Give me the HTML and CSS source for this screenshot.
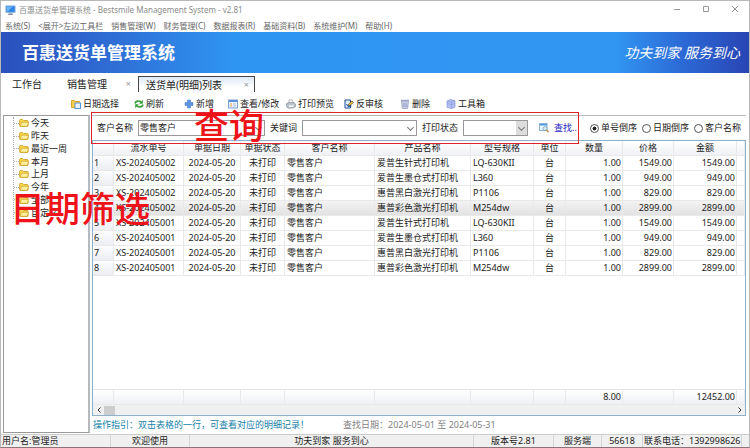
FILE: index.html
```html
<!DOCTYPE html>
<html lang="zh-CN">
  <head>
    <meta charset="UTF-8" />
    <meta name="viewport" content="width=device-width, initial-scale=1.0" />
    <title>百惠送货单管理系统</title>
    <link rel="stylesheet" href="styles.css" />
  </head>
  <body>
    <header class="title-bar">
      <svg class="app-icon" viewBox="0 0 12 12">
        <rect x="1" y="1" width="10" height="7" fill="#2f86e8" stroke="#8fb4dc" />
        <path d="M2 2h6L3 7H2z" fill="#6db4ff" />
        <path d="M4 9h4l1 2H3z" fill="#8a97a8" />
      </svg>
      <h1>百惠送货单管理系统 - Bestsmile Management System - v2.81</h1>
      <div class="window-buttons">
        <button aria-label="最小化"><svg viewBox="0 0 8 8"><path d="M1 4.500h6" /></svg></button>
        <button aria-label="最大化"><svg viewBox="0 0 8 8"><path d="M1.500 1.500h5v5h-5z" /></svg></button>
        <button aria-label="关闭"><svg viewBox="0 0 8 8"><path d="M1 1l6 6M7 1L1 7" /></svg></button>
      </div>
    </header>

    <nav class="menu-bar">
      <a href="#">系统(S)</a>
      <a href="#">&lt;展开&gt;左边工具栏</a>
      <a href="#">销售管理(W)</a>
      <a href="#">财务管理(C)</a>
      <a href="#">数据报表(R)</a>
      <a href="#">基础资料(B)</a>
      <a href="#">系统维护(M)</a>
      <a href="#">帮助(H)</a>
    </nav>

    <div class="banner">
      <h2>百惠送货单管理系统</h2>
      <p>功夫到家 服务到心</p>
    </div>

    <div class="tabs">
      <button class="tab home">工作台</button>
      <button class="tab sales">销售管理<span class="close">×</span></button>
      <button class="tab active">送货单(明细)列表<span class="close">×</span></button>
    </div>

    <div class="toolbar">
      <button>
        <svg viewBox="0 0 10 10"><path d="M.5 1.500h3l1 1h4v6h-8z" fill="#f7cf4f" stroke="#d9a126" /><rect x="4" y="4" width="5.500" height="5.500" fill="#e8f2ff" stroke="#5a94d8" /></svg>
        日期选择
      </button>
      <button>
        <svg viewBox="0 0 10 10"><path d="M1 4.500C1.500 2 5 1.200 7 3M9 5.500C8.500 8 5 8.800 3 7" fill="none" stroke="#35a035" stroke-width="1.600" /><path d="M8.800.8v4H5zM1.200 9.200v-4H5z" fill="#35a035" /></svg>
        刷新
      </button>
      <button>
        <svg viewBox="0 0 10 10"><path d="M3.500 1h3v2.500H9v3H6.500V9h-3V6.500H1v-3h2.500z" fill="#5d95e0" stroke="#3d72c4" stroke-width=".5" /></svg>
        新增
      </button>
      <button>
        <svg viewBox="0 0 10 10"><rect x=".5" y="1" width="9" height="8" fill="#eef4ff" stroke="#7da3dc" /><path d="M1 1h8v2H1z" fill="#5b8fdc" /><path d="M2 5h2M2 7h2" stroke="#e0a243" /><path d="M5 5h3M5 7h3" stroke="#a8bfe4" /></svg>
        查看/修改
      </button>
      <button>
        <svg viewBox="0 0 10 10"><path d="M3 4V.8h3L7.500 4" fill="#fff" stroke="#99a" stroke-width=".7" /><path d="M.6 4.600L3 3.600h5l1.400 1.500v2.600L7 9H2L.6 7.500z" fill="#bcc4ce" stroke="#7c8793" stroke-width=".7" /><path d="M3 6.500h4.500V8H3z" fill="#fff" /></svg>
        打印预览
      </button>
      <button>
        <svg viewBox="0 0 10 10"><path d="M1 1h5.500v8H1z" fill="#e4efff" stroke="#1d4c9c" /><path d="M4 7l.6-2L8 2l1.500 1.500L6 6.500z" fill="#f4c430" stroke="#333" stroke-width=".6" /><path d="M2.500 5l1.500 2.500L7.500 7" fill="none" stroke="#1d4c9c" /></svg>
        反审核
      </button>
      <button>
        <svg viewBox="0 0 10 10"><path d="M1.500 2h7L7.700 9.400H2.300z" fill="#c9cee6" stroke="#9096bd" stroke-width=".7" /><path d="M1 1.300h8" stroke="#8c93b6" /><path d="M3.600 4v4M5 4v4M6.400 4v4" stroke="#8f96c4" stroke-width=".6" /></svg>
        删除
      </button>
      <button>
        <svg viewBox="0 0 10 10"><path d="M1 2.200L4 .6l5 1v6.600L5.500 9.500 1 8.300z" fill="#b4c3f2" stroke="#7f93d8" stroke-width=".7" /><path d="M1 4.500l4.500 1L9 4.500M5.500 3v6.500M1 2.200l4.500 1L9 1.600" fill="none" stroke="#7f93d8" stroke-width=".6" /></svg>
        工具箱
      </button>
    </div>

    <main class="workspace">
      <aside class="sidebar">
        <ul class="date-tree" id="date-tree"></ul>
        <div class="note note-dates">日期筛选</div>
      </aside>

      <section class="content">
        <form class="search">
          <label for="customer">客户名称</label>
          <span class="combo customer"><select id="customer"><option>零售客户</option></select></span>
          <label for="keyword">关键词</label>
          <span class="combo keyword"><select id="keyword"><option></option></select></span>
          <label for="printed">打印状态</label>
          <span class="combo printed"><select id="printed"><option></option></select></span>
          <button type="button" class="find">
            <svg viewBox="0 0 10 10"><rect x=".5" y=".5" width="7.500" height="7" fill="#eaf6ff" stroke="#86b4dc" /><path d="M1 1h7v1.500H1z" fill="#4f9ad8" /><circle cx="6" cy="5.500" r="2" fill="#d5f0fa" stroke="#79a" stroke-width=".7" /><path d="M7.500 7l2 2.300" stroke="#d08a35" stroke-width="1.400" /></svg>
            查找..
          </button>
          <div class="sorting">
            <label><input type="radio" name="sort" checked />单号倒序</label>
            <label><input type="radio" name="sort" />日期倒序</label>
            <label><input type="radio" name="sort" />客户名称</label>
          </div>
          <div class="search-frame"></div>
          <div class="note note-search">查询</div>
        </form>

        <div class="grid">
          <div class="grid-body">
            <table>
              <colgroup>
                <col class="c-no" /><col class="c-serial" /><col class="c-date" /><col class="c-state" />
                <col /><col class="c-product" /><col class="c-model" /><col class="c-unit" />
                <col class="c-qty" /><col class="c-price" /><col class="c-total" /><col class="c-end" />
              </colgroup>
              <thead>
                <tr>
                  <th></th><th>流水单号</th><th>单据日期</th><th>单据状态</th><th>客户名称</th><th>产品名称</th>
                  <th>型号规格</th><th>单位</th><th>数量</th><th>价格</th><th>金额</th><th></th>
                </tr>
              </thead>
              <tbody id="rows"></tbody>
            </table>
          </div>
          <table class="totals">
            <colgroup>
              <col class="c-no" /><col class="c-serial" /><col class="c-date" /><col class="c-state" />
              <col /><col class="c-product" /><col class="c-model" /><col class="c-unit" />
              <col class="c-qty" /><col class="c-price" /><col class="c-total" /><col class="c-end" />
            </colgroup>
            <tbody>
              <tr>
                <td></td><td></td><td></td><td></td><td></td><td></td><td></td><td></td>
                <td class="num">8.00</td><td></td><td class="num">12452.00</td><td></td>
              </tr>
            </tbody>
          </table>
          <div class="scrollbar">
            <button aria-label="向左"><svg viewBox="0 0 6 8"><path d="M4.500 1.500L2 4l2.500 2.500" /></svg></button>
            <div class="thumb"></div>
            <button aria-label="向右"><svg viewBox="0 0 6 8"><path d="M1.500 1.500L4 4 1.500 6.500" /></svg></button>
          </div>
        </div>

        <div class="hints">
          <span class="guide">操作指引：双击表格的一行，可查看对应的明细记录！</span>
          <span class="range">查找日期：2024-05-01 至 2024-05-31</span>
        </div>
      </section>
    </main>

    <footer class="status-bar">
      <div>用户名:管理员</div>
      <div>欢迎使用</div>
      <div>功夫到家 服务到心</div>
      <div>版本号2.81</div>
      <div>服务端</div>
      <div>56618</div>
      <div>联系电话：1392998626</div>
    </footer>

    <script>
      const periods = ["今天", "昨天", "最近一周", "本月", "上月", "今年", "全部", "自定义"];
      const folder =
        '<svg viewBox="0 0 10 10"><path d="M.6 2.500q0-1 1-1h2l1 1h3.500q1 0 1 1v4q0 1-1 1H1.600q-1 0-1-1z" fill="#f8d84c" stroke="#c99a1c" stroke-width=".8"/><path d="M2.500 4.300h7L8.300 8.300H1.200z" fill="#fdf0a0" stroke="#c99a1c" stroke-width=".6"/></svg>';
      document.getElementById("date-tree").innerHTML = periods
        .map((name) => `<li><a href="#">${folder}${name}</a></li>`)
        .join("");

      const products = [
        ["爱普生针式打印机", "LQ-630KII", "1549.00"],
        ["爱普生墨仓式打印机", "L360", "949.00"],
        ["惠普黑白激光打印机", "P1106", "829.00"],
        ["惠普彩色激光打印机", "M254dw", "2899.00"],
      ];
      const orders = ["XS-202405002", "XS-202405001"];
      let rows = "";
      orders.forEach((order, o) => {
        products.forEach(([product, model, price], p) => {
          const no = o * products.length + p + 1;
          rows += `<tr class="${no === 4 ? "selected" : ""}">
            <th>${no}</th><td>${order}</td><td class="mid">2024-05-20</td><td class="mid">未打印</td>
            <td>零售客户</td><td>${product}</td><td>${model}</td><td class="mid">台</td>
            <td class="num">1.00</td><td class="num">${price}</td><td class="num">${price}</td><td></td>
          </tr>`;
        });
      });
      document.getElementById("rows").innerHTML = rows;
    </script>
  </body>
</html>
```

FILE: styles.css
```css
* {
  margin: 0;
  padding: 0;
  box-sizing: border-box;
}

body {
  display: flex;
  flex-direction: column;
  height: 100vh;
  overflow: hidden;
  font-family: "Noto Sans", "Noto Sans CJK SC", sans-serif;
  font-size: 9px;
  line-height: 12px;
  color: #222;
  background: #fff;
  border: 1px solid #b9b9b9;
  border-bottom-color: #8c7478;
  white-space: nowrap;
}

button,
select {
  font: inherit;
  color: inherit;
  background: none;
  border: none;
}

a {
  color: inherit;
  text-decoration: none;
}

svg {
  flex: none;
  width: 10px;
  height: 10px;
}

/* Window title and menu */
.title-bar {
  display: flex;
  align-items: center;
  height: 18px;
  padding-left: 4px;
  color: #8c8c8c;
}

.title-bar h1 {
  flex: 1;
  font-size: 8px;
  font-weight: normal;
}

.title-bar .app-icon {
  width: 11px;
  height: 11px;
  margin-right: 3px;
}

.window-buttons {
  display: flex;
}

.window-buttons button {
  width: 29px;
  height: 16px;
}

.window-buttons svg {
  width: 8px;
  height: 8px;
  fill: none;
  stroke: #999;
}

.menu-bar {
  display: flex;
  gap: 8px;
  height: 13px;
  padding-left: 4px;
  font-size: 8px;
  line-height: 14px;
  color: #666;
}

/* Banner */
.banner {
  display: flex;
  align-items: center;
  justify-content: space-between;
  height: 41px;
  padding: 0 9px 0 21px;
  color: #fff;
  background: linear-gradient(90deg, #2b51be 0%, #2e62cc 10%, #2f95f2 31%, #3196f2 82%, #2c6ad6 91%, #2945b4 100%);
}

.banner h2 {
  font-size: 17px;
  line-height: 24px;
}

.banner p {
  font-size: 14px;
  font-style: italic;
  line-height: 20px;
}

/* Tabs */
.tabs {
  display: flex;
  align-items: flex-end;
  height: 19px;
}

.tab {
  display: flex;
  align-items: center;
  justify-content: space-between;
  height: 16px;
  font-size: 10px;
}

.tab .close {
  font-size: 9px;
  color: #999;
}

.tab.home {
  width: 55px;
  padding-left: 11px;
}

.tab.sales {
  width: 82px;
  padding: 0 7px 0 11px;
}

.tab.active {
  width: 117px;
  padding: 0 5px 0 7px;
  border: 1px solid #444;
  border-bottom: none;
  background: linear-gradient(#dfe9f8, #fff 70%);
}

/* Toolbar */
.toolbar {
  display: grid;
  grid-template-columns: 63px 50px 44px 58px 58px 56px 46px 60px;
  align-items: center;
  height: 23px;
  padding-left: 70px;
}

.toolbar button,
.find {
  display: flex;
  align-items: center;
  gap: 2px;
}

/* Workspace */
.workspace {
  display: flex;
  flex: 1;
  gap: 2px;
  min-height: 0;
  padding: 0 3px 0 2px;
}

.sidebar {
  position: relative;
  width: 87px;
  margin-bottom: 1px;
  padding: 1px 0 0 9px;
  border: 1px solid #999;
  border-right: 2px solid #b5b9c0;
}

.date-tree {
  display: flex;
  flex-direction: column;
  height: 102px;
  list-style: none;
  border-left: 1px dotted #aaa;
}

.date-tree li {
  display: flex;
  flex: 1;
  align-items: center;
}

.date-tree li::before {
  content: "";
  width: 5px;
  border-top: 1px dotted #aaa;
}

.date-tree a {
  display: flex;
  align-items: center;
  gap: 2px;
}

.note {
  position: absolute;
  z-index: 2;
  font-size: 35px;
  font-weight: 500;
  line-height: 36px;
  color: #ee1318;
  pointer-events: none;
}

.note-dates {
  top: 75px;
  left: 6px;
}

.content {
  display: flex;
  flex: 1;
  flex-direction: column;
  min-width: 0;
}

/* Search form */
.search {
  position: relative;
  display: flex;
  align-items: center;
  gap: 5px;
  height: 25px;
  padding-left: 5px;
  border-top: 1px solid #bbb;
}

.search-frame {
  position: absolute;
  top: -4px;
  left: -1px;
  z-index: 1;
  width: 488px;
  height: 32px;
  border: 1px solid #e0242c;
  pointer-events: none;
}

.note-search {
  top: -8px;
  left: 102px;
}

.combo {
  position: relative;
  height: 16px;
}

.combo select {
  display: block;
  width: 100%;
  height: 100%;
  padding: 0 12px 0 1px;
  border: 1px solid #999;
  background: #fff;
  appearance: none;
}

.combo::after {
  content: "";
  position: absolute;
  top: 5px;
  right: 4px;
  width: 4px;
  height: 4px;
  border: solid #777;
  border-width: 0 1px 1px 0;
  transform: rotate(45deg);
}

.customer {
  width: 127px;
}

.keyword {
  width: 115px;
}

.printed {
  width: 65px;
}

.printed select {
  background: linear-gradient(#ddd, #ddd) right / 11px 100% no-repeat #fff;
}

.find {
  gap: 5px;
  margin-left: 6px;
  color: #2222c4;
}

.sorting {
  display: flex;
  gap: 5px;
  margin-left: auto;
  padding-right: 5px;
}

.sorting label {
  display: flex;
  align-items: center;
  gap: 2px;
}

.sorting input {
  width: 9px;
  height: 9px;
  appearance: none;
  border: 1px solid #555;
  border-radius: 50%;
}

.sorting input:checked {
  background: radial-gradient(#222 35%, #fff 45%);
}

/* Detail grid */
.grid {
  display: flex;
  flex: 1;
  flex-direction: column;
  min-height: 0;
  border: 1px solid #8fb0cc;
}

.grid-body {
  flex: 1;
  min-height: 0;
  overflow: hidden;
}

table {
  width: 100%;
  table-layout: fixed;
  border-collapse: separate;
  border-spacing: 0;
}

.c-no { width: 21px; }
.c-serial { width: 70px; }
.c-date { width: 57px; }
.c-state { width: 44px; }
.c-product { width: 96px; }
.c-model { width: 63px; }
.c-unit { width: 32px; }
.c-qty { width: 57px; }
.c-price { width: 51px; }
.c-total { width: 63px; }
.c-end { width: 8px; }

th,
td {
  height: 15px;
  padding: 0 1px;
  overflow: hidden;
  font-weight: normal;
  text-align: left;
  border-right: 1px solid #e9e9e9;
  border-bottom: 1px solid #e9e9e9;
}

thead th {
  text-align: center;
  background: linear-gradient(#fff, #eff1f5);
}

tbody th {
  background: linear-gradient(#fdfdfe, #eceef3);
}

td {
  padding-left: 2px;
}

.mid {
  padding: 0;
  text-align: center;
}

.num {
  text-align: right;
}

.selected td {
  background: linear-gradient(#f3f3f3, #e2e2e2);
}

.totals td {
  height: 16px;
  border-top: 1px solid #e4e4e4;
  background: linear-gradient(#fff, #eef0f5);
}

.scrollbar {
  display: flex;
  align-items: center;
  height: 10px;
  background: #f0f0f0;
}

.scrollbar button {
  width: 11px;
  height: 10px;
}

.scrollbar svg {
  display: block;
  width: 6px;
  height: 8px;
  margin: 0 auto;
  fill: none;
  stroke: #333;
}

.scrollbar .thumb {
  width: 11px;
  height: 9px;
  margin-right: auto;
  background: #cdcdcd;
}

.hints {
  display: flex;
  align-items: center;
  gap: 34px;
  height: 18px;
  padding-left: 1px;
}

.guide {
  color: #1580a8;
}

.range {
  color: #808080;
}

/* Status bar */
.status-bar {
  display: grid;
  grid-template-columns: 110px 79px 1fr 80px 48px 41px 99px 7px;
  height: 13px;
  text-align: center;
  border-top: 1px solid #ccc;
  background: #f0f0f0;
}

.status-bar div {
  overflow: hidden;
  border-right: 1px solid #d4d4d4;
}

.status-bar div:first-child,
.status-bar div:last-child {
  padding-left: 1px;
  text-align: left;
}
```
